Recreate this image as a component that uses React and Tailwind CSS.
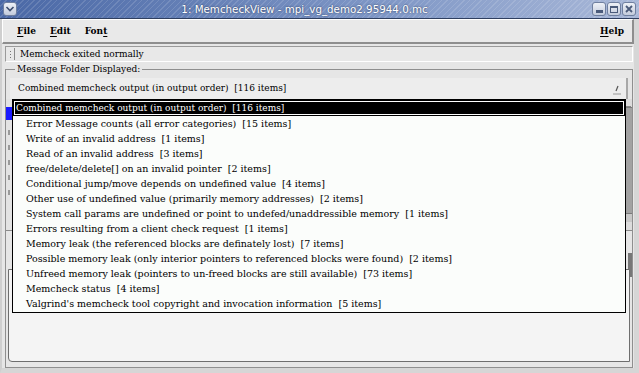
import React from 'react';

const folders = [
  'Error Message counts (all error categories)  [15 items]',
  'Write of an invalid address  [1 items]',
  'Read of an invalid address  [3 items]',
  'free/delete/delete[] on an invalid pointer  [2 items]',
  'Conditional jump/move depends on undefined value  [4 items]',
  'Other use of undefined value (primarily memory addresses)  [2 items]',
  'System call params are undefined or point to undefed/unaddressible memory  [1 items]',
  'Errors resulting from a client check request  [1 items]',
  'Memory leak (the referenced blocks are definately lost)  [7 items]',
  'Possible memory leak (only interior pointers to referenced blocks were found)  [2 items]',
  'Unfreed memory leak (pointers to un-freed blocks are still available)  [73 items]',
  'Memcheck status  [4 items]',
  "Valgrind's memcheck tool copyright and invocation information  [5 items]",
];

function TitleButton({ children }) {
  return (
    <div className="w-[14px] h-[14px] rounded-[3px] border border-[#6f7f9f] bg-[linear-gradient(#eef1f7,#c3cbdc)] flex items-center justify-center">
      {children}
    </div>
  );
}

function TitleBar() {
  return (
    <div className="h-[19px] shrink-0 flex items-center px-[3px] gap-[2px] border-b border-[#2f3f60] bg-[repeating-linear-gradient(135deg,rgba(255,255,255,0.13)_0px,rgba(255,255,255,0.13)_1px,transparent_1px,transparent_4px),linear-gradient(to_right,#4a68a6,#7f97c6_60%,#a9b8d8)]">
      <TitleButton>
        <svg width="10" height="8" viewBox="0 0 10 8">
          <path d="M1.5 2 L5 5.5 L8.5 2" fill="none" stroke="#3d4d6e" strokeWidth="1.6" />
        </svg>
      </TitleButton>
      <div className="flex-1 text-center font-['DejaVu_Sans',sans-serif] text-[10.3px] text-white [text-shadow:0_0_2px_#1c2c50]">
        1: MemcheckView - mpi_vg_demo2.95944.0.mc
      </div>
      <div className="flex gap-[1px]">
        <TitleButton>
          <div className="w-[7px] h-[3px] bg-[#4a5a7a] mt-[4px]" />
        </TitleButton>
        <TitleButton>
          <div className="w-[8px] h-[7px] border-[1.5px] border-t-[2.5px] border-[#4a5a7a]" />
        </TitleButton>
        <TitleButton>
          <svg width="8" height="8" viewBox="0 0 8 8">
            <path d="M1 1 L7 7 M7 1 L1 7" stroke="#4a5a7a" strokeWidth="1.8" />
          </svg>
        </TitleButton>
      </div>
    </div>
  );
}

function MenuItem({ u, rest, pre = '' }) {
  return (
    <span className="font-bold">
      {pre}
      <span className="underline underline-offset-2">{u}</span>
      {rest}
    </span>
  );
}

export default function App() {
  return (
    <div className="w-[639px] h-[373px] overflow-hidden relative flex flex-col bg-[#e6e6e6] font-['DejaVu_Serif',serif] text-[9px] text-black leading-none">
      <TitleBar />

      <div className="flex-1 min-h-0 flex flex-col border-l-[2px] border-l-[#cfcfcf] border-r-[5px] border-r-[#d6d6d6] border-b-[5px] border-b-[#d6d6d6]">
        {/* Menu bar */}
        <div className="h-[25px] shrink-0 flex items-center pl-[14px] pr-[8px] gap-[14px] bg-[#e9e9e9] border-t border-l border-white border-b-[2px] border-r-[2px] border-b-[#8e8e8e] border-r-[#8e8e8e]">
          <MenuItem u="F" rest="ile" />
          <MenuItem u="E" rest="dit" />
          <MenuItem pre="Fon" u="t" rest="" />
          <span className="flex-1" />
          <MenuItem u="H" rest="elp" />
        </div>

        {/* Status line */}
        <div className="mt-[2px] ml-[3px] mr-[1px] h-[16px] shrink-0 flex items-center border border-[#9a9a9a] border-b-white border-r-white bg-[#e8e8e8]">
          <span className="w-[8px] flex flex-col items-center gap-[2px]">
            <span className="w-[1px] h-[1px] bg-[#777]" />
            <span className="w-[1px] h-[1px] bg-[#777]" />
            <span className="w-[1px] h-[1px] bg-[#777]" />
          </span>
          <span className="h-[12px] w-[1px] bg-[#8a8a8a] mr-[5px]" />
          <span>Memcheck exited normally</span>
        </div>

        {/* Group box */}
        <fieldset className="mt-[1px] ml-[3px] mr-[1px] flex-1 min-h-0 border border-[#8f8f8f] px-[4px] pb-[2px] flex flex-col">
          <legend className="ml-[5px] px-[2px] leading-[13px]">Message Folder Displayed:</legend>

          {/* Combo box */}
          <div className="mt-[2px] h-[21px] shrink-0 flex items-center pl-[8px] pr-[4px] bg-[#ededed] border-r-[2px] border-r-[#a8a8a8]">
            <span className="flex-1 whitespace-pre">Combined memcheck output (in output order)  [116 items]</span>
            <svg width="10" height="12" viewBox="0 0 10 12">
              <path d="M6 3 L4 8" stroke="#555" strokeWidth="1.2" />
              <path d="M1 11 L9 11" stroke="#999" strokeWidth="1" />
            </svg>
          </div>

          {/* Panes behind the popup */}
          <div className="flex-1 min-h-0 flex flex-col mx-[-4px]">
            <div className="h-[132px] shrink-0 flex border-b border-[#8a8a8a] bg-[#e3e3e3]">
              <div className="w-[7px] flex flex-col pt-[8px] gap-[10px]">
                <div className="h-[13px] bg-[#1a1aff]" />
                {[0, 1, 2, 3, 4].map((i) => (
                  <div key={i} className="ml-[2px] w-[2px] h-[5px] bg-[#9a9a9a]" />
                ))}
              </div>
              <div className="flex-1 bg-white" />
              <div className="w-[7px] flex flex-col pt-[1px] pb-[8px] bg-[#dcdcdc]">
                <div className="h-[7px] mx-[1px] border-b border-[#888]" />
                <div className="flex-1 bg-[#a2a2a2] border-y border-[#7a7a7a]" />
                <div className="h-[8px] bg-[#c8c8c8]" />
              </div>
            </div>
            <div className="h-[38px] shrink-0 flex justify-end pt-[22px]">
              <div className="w-[4px] h-[24px] bg-[#777]" />
            </div>
            <div className="flex-1 min-h-0 mx-[2px] mb-[3px] border border-[#6e6e6e] rounded-bl-[4px] bg-[#f4f4f4]" />
          </div>
        </fieldset>
      </div>

      {/* Popup list of folders */}
      <div className="absolute left-[12px] top-[99px] w-[614px] border border-black bg-[#fbfdfb] pb-[1px]">
        <div className="bg-black p-[1px]">
          <div className="h-[14px] flex items-center border border-white bg-black text-white pl-[1px] whitespace-pre">
            Combined memcheck output (in output order)  [116 items]
          </div>
        </div>
        {folders.map((f) => (
          <div key={f} className="h-[15px] flex items-center pl-[13px] whitespace-pre text-[9.5px]">
            {f}
          </div>
        ))}
      </div>
    </div>
  );
}
